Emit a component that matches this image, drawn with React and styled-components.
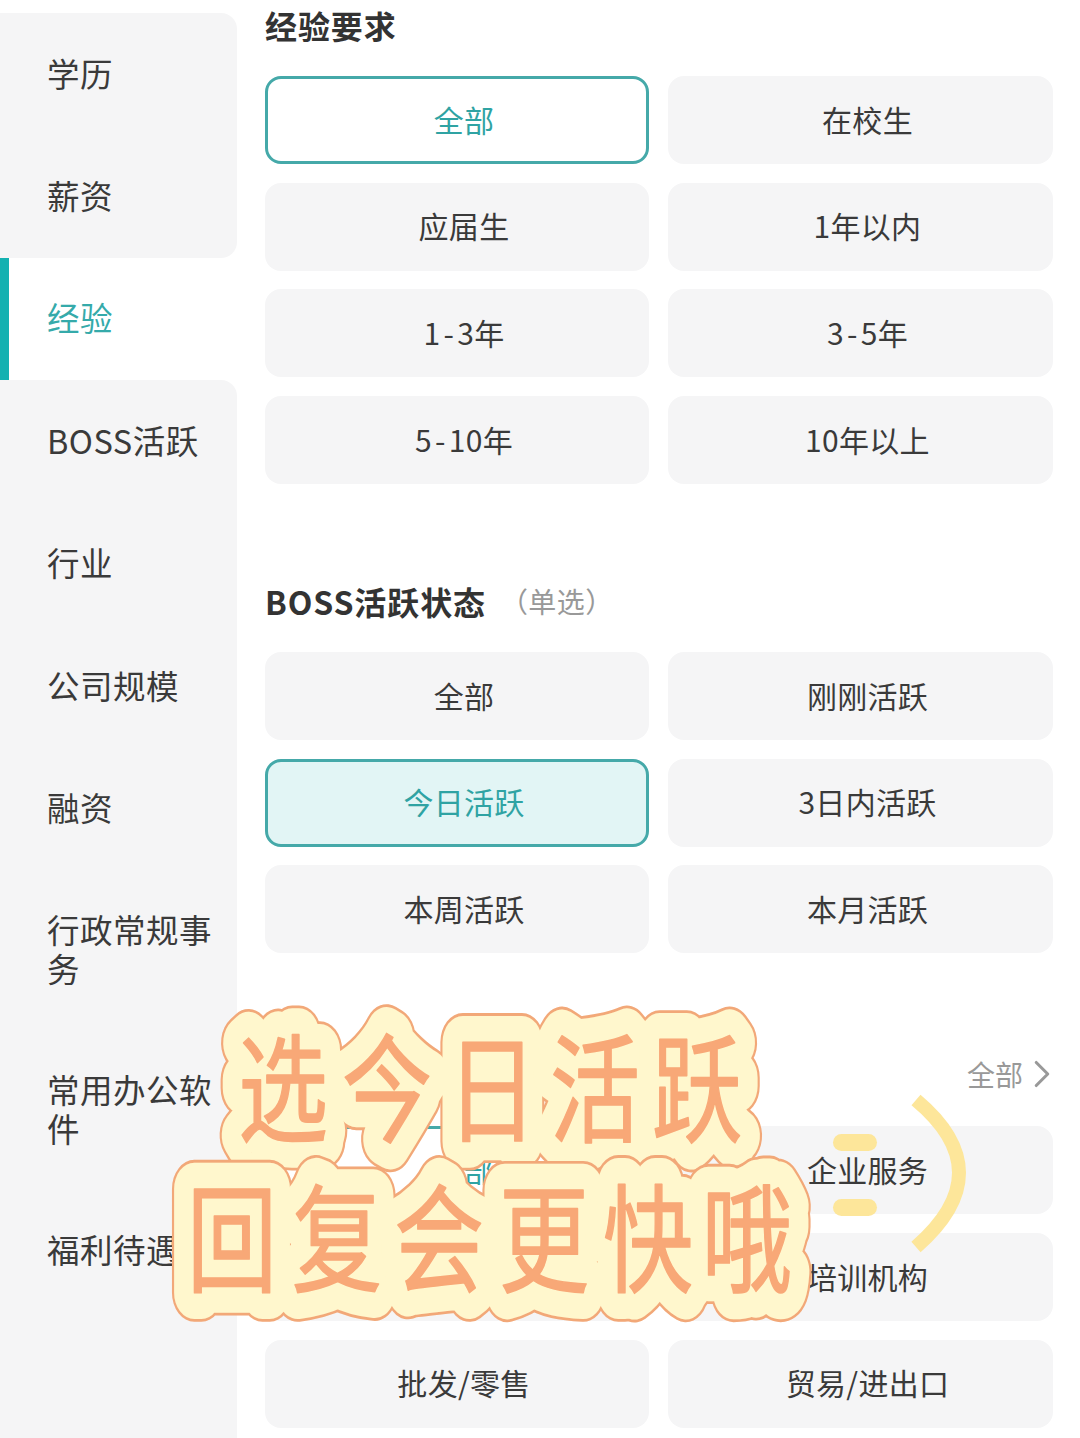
import React from 'react'
import styled, { createGlobalStyle } from 'styled-components'
import { ChevronRight } from 'lucide-react'

const FONT = `"Noto Sans CJK SC", Roboto, "Noto Sans", sans-serif`

const Global = createGlobalStyle`
  html, body { margin: 0; padding: 0; background: #fff; }
  body { font-family: ${FONT}; color: #333; }
`

const Page = styled.div`
  position: relative;
  width: 1080px;
  height: 1438px;
  overflow: hidden;
  display: flex;
`
const Sidebar = styled.div`
  width: 237px;
  flex: none;
  padding-top: 13px;
  display: flex;
  flex-direction: column;
`
const SideItem = styled.div`
  min-height: 122.4px;
  box-sizing: border-box;
  padding: 39px 20px 43px 47px;
  display: flex;
  align-items: center;
  font-size: 32.5px;
  line-height: 39px;
  letter-spacing: 0.5px;
  background: ${(p) => (p.$active ? '#fff' : '#f5f5f6')};
  color: ${(p) => (p.$active ? '#35aaaa' : '#3a3a3a')};
  border-left: ${(p) => (p.$active ? '9px solid #14b1b1' : 'none')};
  padding-left: ${(p) => (p.$active ? '38px' : '47px')};
  border-top-right-radius: ${(p) => (p.$first || p.$afterActive ? '16px' : '0')};
  border-bottom-right-radius: ${(p) => (p.$beforeActive ? '16px' : '0')};
  flex: ${(p) => (p.$last ? '1' : 'none')};
  align-items: ${(p) => (p.$last ? 'flex-start' : 'center')};
`
const Main = styled.div`
  flex: 1;
  padding: 0 27px 0 28px;
`
const Section = styled.section`
  margin-top: ${(p) => p.$top}px;
`
const TitleRow = styled.div`
  height: 52px;
  margin-bottom: 24px;
  padding-bottom: 3px;
  box-sizing: border-box;
  display: flex;
  align-items: center;
`
const Title = styled.h2`
  margin: 0;
  font-size: 32px;
  font-weight: 700;
  color: #333;
  letter-spacing: 0.9px;
`
const Sub = styled.span`
  margin-left: 14px;
  font-size: 28px;
  letter-spacing: 0.4px;
  color: #999;
`
const More = styled.span`
  margin-left: auto;
  margin-bottom: 2px;
  display: flex;
  align-items: center;
  font-size: 28px;
  color: #999;

  svg {
    margin: -7px -12px -7px -4px;
  }
`
const Grid = styled.div`
  display: grid;
  grid-template-columns: 384px 385px;
  grid-auto-rows: 88px;
  column-gap: 19px;
  row-gap: 18.7px;
`
const Option = styled.div`
  box-sizing: border-box;
  border-radius: 16px;
  padding: 0 0 3px 14px;
  display: flex;
  align-items: center;
  justify-content: center;
  font-size: 30px;
  letter-spacing: 0.3px;
  color: ${(p) => (p.$state ? '#2fa3a3' : '#3a3a3a')};
  background: ${(p) => (p.$state === 'filled' ? '#e2f5f5' : p.$state === 'outline' ? '#fff' : '#f5f5f6')};
  border: ${(p) => (p.$state ? '3px solid #45a9a9' : 'none')};
`
const Dash = styled.span`
  margin: 0 3px;
`
const Overlay = styled.svg`
  position: absolute;
  inset: 0;
  width: 1080px;
  height: 1438px;
  pointer-events: none;
`
const StickerText = styled.text`
  font-family: ${FONT};
  font-size: 90px;
  font-weight: 400;
  stroke-linejoin: round;
  stroke-linecap: round;
  vector-effect: non-scaling-stroke;
`

const sideItems = ['学历', '薪资', '经验', 'BOSS活跃', '行业', '公司规模', '融资', '行政常规事务', '常用办公软件', '福利待遇']

const experience = [['全部', 'outline'], ['在校生'], ['应届生'], ['1年以内'], ['1-3年'], ['3-5年'], ['5-10年'], ['10年以上']]
const activity = [['全部'], ['刚刚活跃'], ['今日活跃', 'filled'], ['3日内活跃'], ['本周活跃'], ['本月活跃']]
const industry = [['全部', 'outline'], ['企业服务'], ['互联网'], ['培训机构'], ['批发/零售'], ['贸易/进出口']]

// the hyphen in the year ranges sits wider than the font's own
const rangeLabel = (label) => {
  const parts = label.split('-')
  if (parts.length < 2) return label
  return <span>{parts[0]}<Dash>-</Dash>{parts[1]}</span>
}

const OptionGrid = ({ items }) => (
  <Grid>
    {items.map(([label, state], i) => (
      <Option key={i} $state={state}>{rangeLabel(label)}</Option>
    ))}
  </Grid>
)

// one sticker line: orange rim, cream body, orange letters
const StickerLine = ({ chars, xs, y }) => {
  const x = xs.join(' ')
  return (
    <g transform={`translate(0 ${y}) scale(1 1.3)`}>
      <StickerText x={x} y="0" fill="#f2a878" stroke="#f2a878" strokeWidth="52">{chars}</StickerText>
      <StickerText x={x} y="0" fill="#fff7cd" stroke="#fff7cd" strokeWidth="47">{chars}</StickerText>
      <StickerText x={x} y="0" fill="#f8a877" stroke="#f8a877" strokeWidth="1.5">{chars}</StickerText>
    </g>
  )
}

export default function App() {
  return (
    <Page>
      <Global />
      <Sidebar>
        {sideItems.map((label, i) => (
          <SideItem
            key={label}
            $first={i === 0}
            $active={i === 2}
            $beforeActive={i === 1}
            $afterActive={i === 3}
            $last={i === sideItems.length - 1}
          >
            {label}
          </SideItem>
        ))}
      </Sidebar>
      <Main>
        <Section $top={0}>
          <TitleRow><Title>经验要求</Title></TitleRow>
          <OptionGrid items={experience} />
        </Section>
        <Section $top={92}>
          <TitleRow><Title>BOSS活跃状态</Title><Sub>（单选）</Sub></TitleRow>
          <OptionGrid items={activity} />
        </Section>
        <Section $top={97}>
          <TitleRow>
            <Title>公司行业</Title>
            <More>全部<ChevronRight size={46} strokeWidth={1.6} /></More>
          </TitleRow>
          <OptionGrid items={industry} />
        </Section>
      </Main>
      <Overlay viewBox="0 0 1080 1438">
        <path d="M916 1100 Q1002 1172 916 1247" fill="none" stroke="#fde69a" strokeWidth="14" />
        <rect x="833" y="1134" width="44" height="17" rx="8.5" fill="#fde69a" />
        <rect x="833" y="1199" width="44" height="17" rx="8.5" fill="#fde69a" />
        <StickerLine chars="选今日活跃" xs={[238, 342, 447, 550, 652]} y={1133} />
        <StickerLine chars="回复会更快哦" xs={[187, 292, 394, 499, 603, 702]} y={1283} />
      </Overlay>
    </Page>
  )
}
